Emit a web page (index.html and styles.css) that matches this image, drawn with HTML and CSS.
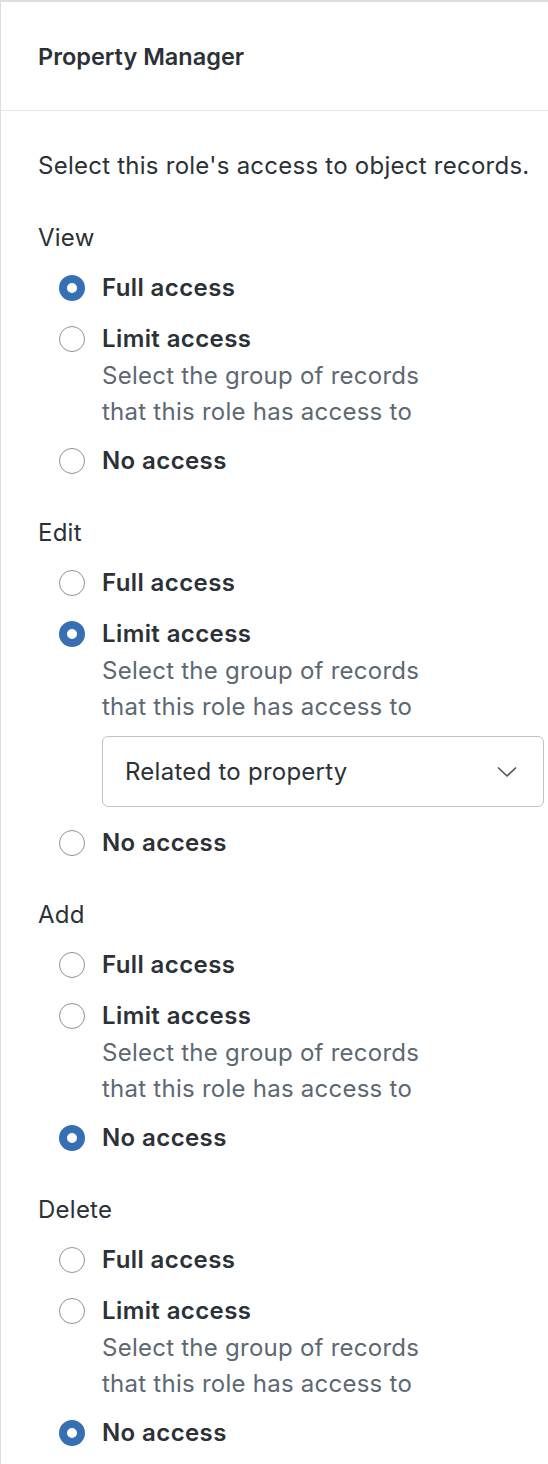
FILE: index.html
```html
<!DOCTYPE html>
<html lang="en">
<head>
  <meta charset="UTF-8">
  <meta name="viewport" content="width=device-width, initial-scale=1.0">
  <title>Property Manager</title>
  <link rel="stylesheet" href="styles.css">
</head>
<body>
  <div class="panel">
    <div class="panel-header">
      <h2>Property Manager</h2>
    </div>
    <div class="panel-body">
      <p class="intro">Select this role's access to object records.</p>

      <div class="group">
        <div class="group-label">View</div>
        <div class="options">
          <label class="option"><span class="radio checked"></span><span class="opt-text">Full access</span></label>
          <label class="option"><span class="radio"></span><span class="opt-text">Limit access<span class="desc">Select the group of records<br>that this role has access to</span></span></label>
          <label class="option"><span class="radio"></span><span class="opt-text">No access</span></label>
        </div>
      </div>

      <div class="group">
        <div class="group-label">Edit</div>
        <div class="options">
          <label class="option"><span class="radio"></span><span class="opt-text">Full access</span></label>
          <label class="option"><span class="radio checked"></span><span class="opt-text">Limit access<span class="desc">Select the group of records<br>that this role has access to</span>
            <span class="select">Related to property
              <svg width="20" height="12" viewBox="0 0 20 12"><path d="M1 1.5l9 8.5 9-8.5" fill="none" stroke="#4a525a" stroke-width="1.6"/></svg>
            </span></span></label>
          <label class="option"><span class="radio"></span><span class="opt-text">No access</span></label>
        </div>
      </div>

      <div class="group">
        <div class="group-label">Add</div>
        <div class="options">
          <label class="option"><span class="radio"></span><span class="opt-text">Full access</span></label>
          <label class="option"><span class="radio"></span><span class="opt-text">Limit access<span class="desc">Select the group of records<br>that this role has access to</span></span></label>
          <label class="option"><span class="radio checked"></span><span class="opt-text">No access</span></label>
        </div>
      </div>

      <div class="group">
        <div class="group-label">Delete</div>
        <div class="options">
          <label class="option"><span class="radio"></span><span class="opt-text">Full access</span></label>
          <label class="option"><span class="radio"></span><span class="opt-text">Limit access<span class="desc">Select the group of records<br>that this role has access to</span></span></label>
          <label class="option"><span class="radio checked"></span><span class="opt-text">No access</span></label>
        </div>
      </div>
    </div>
  </div>
</body>
</html>
```

FILE: styles.css
```css
body {
  margin: 0;
  font-family: Inter, "Open Sans", Arial, sans-serif;
  color: #2b3137;
  background: #fff;
}
.panel {
  width: 560px;
  border-top: 2px solid #dedede;
  border-left: 1px solid #dedede;
  min-height: 1462px;
}
.panel-header {
  height: 108px;
  padding-left: 37px;
  display: flex;
  align-items: center;
  border-bottom: 1px solid #e4e4e4;
}
.panel-header h2 {
  margin: 0;
  font-size: 23.5px;
  font-weight: 600;
}
.panel-body {
  padding: 37px 0 0 37px;
  font-size: 24px;
  line-height: 36px;
  letter-spacing: 0.25px;
}
.intro {
  margin: 0;
}
.group {
  margin-top: 36px;
}
.group-label {
  line-height: 36px;
}
.options {
  display: flex;
  flex-direction: column;
  gap: 15px;
  margin-top: 14px;
  padding-left: 21px;
}
.option {
  display: flex;
  align-items: flex-start;
  gap: 17px;
}
.radio {
  flex: none;
  width: 24px;
  height: 24px;
  margin-top: 5px;
  border: 1px solid #8d9296;
  border-radius: 50%;
  box-sizing: content-box;
}
.radio.checked {
  border: 8px solid #3670b3;
  width: 10px;
  height: 10px;
  background: #fff;
}
.opt-text {
  font-weight: 600;
  letter-spacing: 0.4px;
  display: flex;
  flex-direction: column;
}
.desc {
  font-weight: 400;
  letter-spacing: 0.25px;
  color: #5d6873;
  margin: 1px 0 -2px;
}
.select {
  font-weight: 400;
  letter-spacing: 0.25px;
  margin: 13px 0 3px;
  width: 442px;
  height: 71px;
  box-sizing: border-box;
  border: 1px solid #bfc3c7;
  border-radius: 6px;
  padding: 0 26px 0 22px;
  display: flex;
  align-items: center;
  justify-content: space-between;
}
```
